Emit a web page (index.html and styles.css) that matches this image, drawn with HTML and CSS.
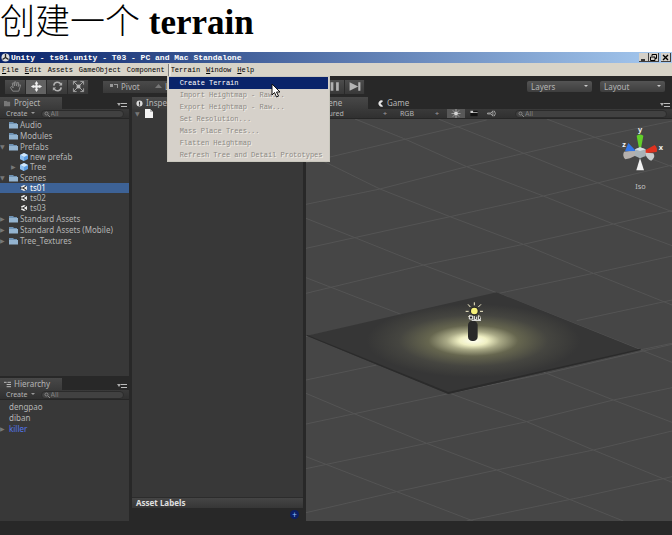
FILE: index.html
```
<!DOCTYPE html>
<html lang="zh-CN">
<head>
  <meta charset="UTF-8">
  <meta name="viewport" content="width=device-width, initial-scale=1.0">
  <title>创建一个 terrain</title>
  <link rel="stylesheet" href="styles.css">
</head>
<body>
  <h1 class="heading">创建一个 <b>terrain</b></h1>

  <div class="app">
    <div class="titlebar">
      <svg class="logo" viewBox="0 0 9 9"><circle cx="4.500" cy="4.500" r="4" fill="#ddd"/><path d="M4.500 4.500V1M4.500 4.500L1.500 6.500M4.500 4.500L7.500 6.500" stroke="#222" stroke-width="1.300"/></svg>
      <span class="caption">Unity - ts01.unity - T03 - PC and Mac Standalone</span>
      <div class="window-btns">
        <button aria-label="Minimize"><svg viewBox="0 0 9 9"><path d="M2 7H6" stroke="#000" stroke-width="1.500"/></svg></button>
        <button aria-label="Restore"><svg viewBox="0 0 9 9"><path d="M3 3V1.500H7.500V5.500H6M1.500 4H6V7.500H1.500Z" fill="none" stroke="#000"/></svg></button>
        <button class="close" aria-label="Close"><svg viewBox="0 0 9 9"><path d="M2 2L7 7M7 2L2 7" stroke="#000" stroke-width="1.400"/></svg></button>
      </div>
    </div>

    <nav class="menubar">
      <button><u>F</u>ile</button>
      <button><u>E</u>dit</button>
      <button>Assets</button>
      <button>GameObject</button>
      <button>Component</button>
      <div class="menu-open">
        <button class="open">Terrain</button>
        <div class="dropdown">
          <button class="active">Create Terrain</button>
          <button disabled>Import Heightmap - Raw...</button>
          <button disabled>Export Heightmap - Raw...</button>
          <button disabled>Set Resolution...</button>
          <button disabled>Mass Place Trees...</button>
          <button disabled>Flatten Heightmap</button>
          <button disabled>Refresh Tree and Detail Prototypes</button>
          <svg class="cursor" viewBox="0 0 10 15"><path d="M1 1V12L3.500 9.500L5.500 14L7.500 13L5.500 9H9Z" fill="#fff" stroke="#111"/></svg>
        </div>
      </div>
      <button><u>W</u>indow</button>
      <button><u>H</u>elp</button>
    </nav>

    <div class="toolbar">
      <div class="tools">
        <button aria-label="Hand"><svg viewBox="0 0 14 14"><path d="M4 12L1.500 8L3 7L4.500 8.500L3.500 3.500L5 3L6 6.500V2L7.500 2L8 6.500L9 2.500L10.500 3L10 7L11.500 5L12.500 5.500L10.500 12Z" fill="none" stroke="#8b8b8b"/></svg></button>
        <button class="on" aria-label="Move"><svg viewBox="0 0 14 14"><path d="M7 1L9 4H8V6H10V5L13 7L10 9V8H8V10H9L7 13L5 10H6V8H4V9L1 7L4 5V6H6V4H5Z" fill="#eee"/></svg></button>
        <button aria-label="Rotate"><svg viewBox="0 0 14 14"><path d="M3 6A4 4 0 0 1 10.500 4.500M11 8A4 4 0 0 1 3.500 9.500" fill="none" stroke="#b0b0b0" stroke-width="1.700"/><path d="M8.500 6H12V2.500ZM5.500 8H2V11.500Z" fill="#b0b0b0"/></svg></button>
        <button aria-label="Scale"><svg viewBox="0 0 14 14"><path d="M2 2L12 12M12 2L2 12M1.500 5V1.500H5M9 1.500H12.500V5M12.500 9V12.500H9M5 12.500H1.500V9" fill="none" stroke="#aaa"/><path d="M5 5H9V9H5Z" fill="#bbb"/></svg></button>
      </div>
      <div class="handles">
        <button><svg viewBox="0 0 9 7"><path d="M0 1H3V4H0ZM4 1H8V5H7V2H4Z" fill="#999"/></svg>Pivot</button>
        <button><svg viewBox="0 0 9 7"><path d="M1 5L4.500 1L8 5Z" fill="#777"/></svg>Local</button>
      </div>
      <div class="play">
        <button aria-label="Play"><svg viewBox="0 0 14 12"><path d="M3 2L11 6L3 10Z" fill="#aaa"/></svg></button>
        <button aria-label="Pause"><svg viewBox="0 0 14 12"><path d="M3 2H5.500V10H3ZM8 2H10.500V10H8Z" fill="#b0b0b0"/></svg></button>
        <button aria-label="Step"><svg viewBox="0 0 14 12"><path d="M2 2L10 6V2H12V10H10V6L2 10Z" fill="#b5b5b5"/></svg></button>
      </div>
      <label class="drop"><select aria-label="Layers"><option>Layers</option></select></label>
      <label class="drop"><select aria-label="Layout"><option>Layout</option></select></label>
    </div>

    <main class="workspace">
      <div class="side">
        <section class="panel">
          <div class="tabs">
            <button class="tab"><svg viewBox="0 0 8 8"><path d="M0 1H3L4 2H7V7H0Z" fill="#777"/></svg>Project</button>
            <button class="options" aria-label="Panel options"><svg viewBox="0 0 10 5"><path d="M0 1H4L2 4Z" fill="#aaa"/><path d="M4 1.500H10M4 4.500H10" stroke="#bbb"/></svg></button>
          </div>
          <div class="panel-bar">
            <button class="create">Create</button>
            <input class="search" type="search" placeholder="All" aria-label="Search project">
          </div>
          <ul class="tree">
            <li><i></i><svg class="folder"><use href="#folder"/></svg>Audio</li>
            <li><i></i><svg class="folder"><use href="#folder"/></svg>Modules</li>
            <li><i class="down"></i><svg class="folder"><use href="#folder"/></svg>Prefabs</li>
            <li class="child"><i></i><svg class="item"><use href="#cube"/></svg>new prefab</li>
            <li class="child"><i class="right"></i><svg class="item"><use href="#cube"/></svg>Tree</li>
            <li><i class="down"></i><svg class="folder"><use href="#folder"/></svg>Scenes</li>
            <li class="child selected"><i></i><svg class="item"><use href="#scene"/></svg>ts01</li>
            <li class="child"><i></i><svg class="item"><use href="#scene"/></svg>ts02</li>
            <li class="child"><i></i><svg class="item"><use href="#scene"/></svg>ts03</li>
            <li><i class="right"></i><svg class="folder"><use href="#folder"/></svg>Standard Assets</li>
            <li><i class="right"></i><svg class="folder"><use href="#folder"/></svg>Standard Assets (Mobile)</li>
            <li><i class="right"></i><svg class="folder"><use href="#folder"/></svg>Tree_Textures</li>
          </ul>
        </section>

        <section class="panel">
          <div class="tabs">
            <button class="tab"><svg viewBox="0 0 8 8"><path d="M0 1.500H3M3 4H8M3 6.500H8M4 1.500H8" stroke="#ccc"/></svg>Hierarchy</button>
            <button class="options" aria-label="Panel options"><svg viewBox="0 0 10 5"><path d="M0 1H4L2 4Z" fill="#aaa"/><path d="M4 1.500H10M4 4.500H10" stroke="#bbb"/></svg></button>
          </div>
          <div class="panel-bar">
            <button class="create">Create</button>
            <input class="search" type="search" placeholder="All" aria-label="Search hierarchy">
          </div>
          <ul class="tree objects">
            <li><i></i>dengpao</li>
            <li><i></i>diban</li>
            <li class="prefab"><i class="right"></i>killer</li>
          </ul>
        </section>
      </div>

      <section class="panel inspector">
        <div class="tabs">
          <button class="tab"><svg viewBox="0 0 8 8"><circle cx="4" cy="4" r="3.500" fill="#ddd"/><path d="M4 2V5M4 5.500V6.500" stroke="#333" stroke-width="1.300"/></svg>Inspector</button>
        </div>
        <div class="asset">
          <i class="down"></i>
          <svg viewBox="0 0 8 9"><path d="M0 0H5L8 3V9H0Z" fill="#f4f4f4"/><path d="M5 0V3H8" fill="#bbb"/></svg>
        </div>
        <div class="labels">Asset Labels</div>
        <div class="labels-foot"><button class="add" aria-label="Add label">+</button></div>
      </section>

      <section class="panel scene">
        <div class="tabs">
          <button class="tab"><svg viewBox="0 0 8 8"><path d="M1 1V7M4 1V7M1 4H7" stroke="#aaa"/></svg>Scene</button>
          <button class="tab off"><svg viewBox="0 0 8 8"><path d="M7 1A3.500 3.500 0 1 0 7 7L4 4Z" fill="#e4e4e4"/></svg>Game</button>
          <button class="options" aria-label="Panel options"><svg viewBox="0 0 10 5"><path d="M0 1H4L2 4Z" fill="#aaa"/><path d="M4 1.500H10M4 4.500H10" stroke="#bbb"/></svg></button>
        </div>
        <div class="panel-bar view-bar">
          <select class="shading" aria-label="Draw mode"><option>Textured</option></select>
          <span class="updown">÷</span>
          <select class="channel" aria-label="Render mode"><option>RGB</option></select>
          <span class="updown">÷</span>
          <button class="toggle on" aria-label="Lighting"><svg viewBox="0 0 12 10"><circle cx="6" cy="5" r="2" fill="#eee"/><path d="M6 0V10M1 5H11M2.500 1.500L9.500 8.500M9.500 1.500L2.500 8.500" stroke="#ccc" stroke-width=".7"/></svg></button>
          <button class="toggle" aria-label="Overlays"><svg viewBox="0 0 12 10"><path d="M2 2H10V8H2Z" fill="#111"/><path d="M2 2H5V3.500H10V4.500H2Z" fill="#ccc"/></svg></button>
          <button class="toggle" aria-label="Audio"><svg viewBox="0 0 12 10"><path d="M1 4.500H5L7 2V8L5 5.500H1ZM8.500 2Q11 5 8.500 8" fill="none" stroke="#aaa"/></svg></button>
          <input class="search" type="search" placeholder="All" aria-label="Search scene">
        </div>
        <svg class="viewport" viewBox="18 27 1098 1206" preserveAspectRatio="xMidYMid slice">
          <defs>
            <radialGradient id="glow" gradientUnits="userSpaceOnUse" cx="0" cy="0" r="1" gradientTransform="translate(520 692) scale(320 110)">
              <stop offset="0" stop-color="#fffff0"/>
              <stop offset=".13" stop-color="#f0f0c4"/>
              <stop offset=".25" stop-color="#a9a986"/>
              <stop offset=".42" stop-color="#66664f"/>
              <stop offset=".7" stop-color="#454540"/>
              <stop offset="1" stop-color="#363636"/>
            </radialGradient>
          </defs>
          <!-- ground grid -->
          <g class="grid">
            <path d="M18 158L200 115L560 30M18 283L240 237L500 170L800 100L1116 33M18 415L450 320L730 258L1116 165M18 550L370 465L670 403L940 342L1116 302M18 680L620 545L880 490L1116 438M830 632L1116 570M18 810L230 765M980 728L1116 700M18 942L450 850L740 790L1116 703M18 1076L380 1000L680 935L940 870L1116 833M18 1208L290 1145L590 1080L880 1020L1116 963M500 1233L850 1160L1116 1100"/>
            <path d="M165 27L310 85L500 170L730 258L940 342L1116 407M18 128L240 237L450 320L670 403L880 490L1116 585M18 325L170 385L370 465L590 548L1116 757M18 503L290 608L740 790L940 870L1116 937M450 850L680 935L880 1020L1116 1117M18 850L160 910L380 1000L590 1080L970 1233M18 1040L290 1145L520 1233M415 27L560 85L820 190L1116 305M740 27L1116 170"/>
          </g>
          <path d="M20 677L590 547L1022 720L445 852Z" fill="url(#glow)"/>
          <path d="M445 852L1022 720V716L445 846L20 674V677Z" fill="#2b2b2b"/>
          <rect x="504" y="632" width="29" height="61" rx="13" fill="#292929"/>
          <!-- light icon -->
          <circle cx="523" cy="603" r="13" fill="#222"/>
          <circle cx="523" cy="603" r="10" fill="#f5f07a"/>
          <path d="M523 586V577M535 591L543 583M540 604H549M535 615L541 621M511 615L505 621M506 604H497M511 591L504 583" stroke="#f4eecb" stroke-width="3"/>
          <path d="M508 618H518V627H508ZM523 618V629H529V620M535 618V629H541V622M515 631H543" fill="#222" stroke="#f3f3f3" stroke-width="3"/>
          <!-- axis gizmo -->
          <path d="M1010 120L972 125Q966 138 976 148L990 145L1012 134Z" fill="#b5b0ad"/>
          <path d="M1008 123L985 99L975 124Z" fill="#3276e8"/>
          <path d="M1017 115L1010 77Q1020 70 1030 77L1023 115Z" fill="#62cf29"/>
          <path d="M1030 124L1064 105Q1074 114 1070 126L1036 130Z" fill="#df321f"/>
          <path d="M1034 128L1060 130Q1068 142 1054 152Q1042 150 1034 128Z" fill="#c9cdce"/>
          <path d="M1005 118L1020 112L1037 118V138L1020 145L1005 138Z" fill="#a9b2b7"/>
          <path d="M1005 118L1020 112L1037 118L1020 123Z" fill="#d5dee2"/>
          <path d="M1020 144L1009 181H1032Z" fill="#f1f1f1"/>
          <g class="axis">
            <text x="1014" y="65">y</text>
            <text x="1076" y="119">x</text>
            <text x="967" y="112">z</text>
          </g>
          <text class="iso" x="1006" y="237">Iso</text>
        </svg>
      </section>
    </main>
    <footer class="status"></footer>
  </div>

  <svg class="sprites" aria-hidden="true">
    <symbol id="folder" viewBox="0 0 9 8"><path d="M0 1H4L5 2H8V7H0Z" fill="#6f92b3"/><path d="M0 3H9V7.500H0Z" fill="#94b4d0"/></symbol>
    <symbol id="cube" viewBox="0 0 8 8"><path d="M4 0L8 2V6L4 8L0 6V2Z" fill="#5c9ee4"/><path d="M4 0L8 2L4 4L0 2Z" fill="#d2e8fb"/><path d="M0 2L4 4V8L0 6Z" fill="#8fc0f0"/></symbol>
    <symbol id="scene" viewBox="0 0 8 8"><path d="M4 1L7 2.500V5.500L4 7L1 5.500V2.500Z" fill="#ececec"/><path d="M3 4L6 2M3 4L6 6M3 4H0" stroke="#222" stroke-width="1"/></symbol>
  </svg>
</body>
</html>
```
FILE: styles.css
```
* {
  margin: 0;
  padding: 0;
  box-sizing: border-box;
}

body {
  min-height: 100vh;
  display: flex;
  flex-direction: column;
  background-color: #fff;
  font-family: "Noto Sans", sans-serif;
  font-size: 8px;
  line-height: 10px;
  color: #b4b4b4;
}

button, select, input {
  font: inherit;
  color: inherit;
  background: none;
  border: none;
  outline: none;
  appearance: none;
}

svg {
  display: block;
  flex: none;
}

.sprites {
  position: absolute;
  width: 0;
  height: 0;
}

.heading {
  height: 52px;
  font-family: "Liberation Serif", "Noto Sans CJK SC", serif;
  font-size: 35px;
  font-weight: 300;
  line-height: 46px;
  color: #000;
}

.heading b {
  font-weight: 700;
}

.app {
  flex: 1;
  display: flex;
  flex-direction: column;
  background-color: #282828;
}

/* window frame */
.titlebar {
  height: 11px;
  display: flex;
  align-items: center;
  gap: 1px;
  padding: 0 1px;
  background: linear-gradient(to right, #0a246a, #a6caf0);
  font-family: "Liberation Mono", monospace;
  font-size: 8px;
  font-weight: bold;
  color: #fff;
}

.logo {
  width: 9px;
  height: 9px;
}

.caption {
  flex: 1;
}

.window-btns {
  display: flex;
}

.window-btns button {
  width: 10px;
  height: 9px;
  background-color: #d4d0c8;
  border-right: 1px solid #404040;
  border-bottom: 1px solid #404040;
}

.window-btns .close {
  margin-left: 2px;
}

.menubar {
  height: 13px;
  display: flex;
  align-items: center;
  gap: 6px;
  padding: 0 2px;
  background-color: #d8d4c8;
  font-family: "Liberation Mono", monospace;
  font-size: 7px;
  line-height: 12px;
  color: #000;
}

.menu-open {
  position: relative;
}

.open {
  box-shadow: -2px 0 0 #e8e6de, -3px 0 0 #808080;
}

.dropdown {
  position: absolute;
  top: 13px;
  left: -3px;
  z-index: 2;
  width: 161px;
  display: flex;
  flex-direction: column;
  padding: 0 1px;
  background-color: #d6d1ca;
  box-shadow: 0 0 0 1px #c9c7bd;
}

.dropdown button {
  height: 12px;
  padding-left: 11px;
  text-align: left;
  white-space: nowrap;
}

.dropdown button:disabled {
  color: #8c8984;
  text-shadow: 1px 1px 0 #f2efe9;
}

.dropdown .active {
  background-color: #0a246a;
  color: #fff;
}

.cursor {
  position: absolute;
  top: 6px;
  left: 103px;
  width: 10px;
  height: 15px;
}

/* main toolbar */
.toolbar {
  height: 21px;
  display: flex;
  align-items: center;
  gap: 8px;
  padding: 0 7px 0 5px;
}

.tools, .play, .handles {
  display: flex;
}

.tools button, .play button {
  height: 14px;
  display: flex;
  align-items: center;
  justify-content: center;
  background: linear-gradient(#4c4c4c, #383838);
  border-right: 1px solid #2a2a2a;
}

.tools button {
  width: 21px;
}

.tools .on {
  background: #626262;
}

.tools svg {
  width: 13px;
  height: 13px;
}

.handles {
  margin-left: 6px;
}

.handles button {
  width: 44px;
  height: 12px;
  display: flex;
  align-items: center;
  gap: 2px;
  padding-left: 7px;
  background: linear-gradient(#4a4a4a, #393939);
}

.handles svg {
  width: 9px;
  height: 7px;
}

.play {
  flex: 1;
  margin-left: 106px;
}

.play button {
  width: 20px;
}

.play svg {
  width: 16px;
  height: 13px;
}

.drop {
  position: relative;
}

.drop select {
  width: 65px;
  height: 11px;
  display: block;
  padding: 0 4px;
  background: linear-gradient(#545454, #3e3e3e);
  border-radius: 2px;
}

.drop::after {
  content: "";
  position: absolute;
  top: 4px;
  right: 4px;
  border: 2px solid transparent;
  border-top-color: #ccc;
}

/* docked panels */
.workspace {
  flex: 1;
  display: grid;
  grid-template-columns: 129fr 171fr 366fr;
  gap: 3px;
}

.side {
  display: grid;
  grid-template-rows: 279fr 143fr;
  gap: 2px;
}

.panel {
  min-width: 0;
  display: flex;
  flex-direction: column;
  background-color: #383838;
}

.tabs {
  height: 12px;
  display: flex;
  align-items: stretch;
  background-color: #282828;
}

.tab {
  min-width: 62px;
  display: flex;
  align-items: center;
  gap: 3px;
  padding: 0 4px;
  background: linear-gradient(#484848, #3a3a3a);
}

.tab.off {
  padding-left: 9px;
  background: none;
}

.tab svg {
  width: 7px;
  height: 7px;
}

.options {
  align-self: flex-end;
  margin: 0 2px 2px auto;
}

.options svg {
  width: 10px;
  height: 5px;
}

.panel-bar {
  height: 10px;
  display: flex;
  align-items: center;
  padding: 0 5px 0 6px;
  background: linear-gradient(#3a3a3a, #303030);
  border-bottom: 1px solid #262626;
  font-size: 7px;
  line-height: 9px;
}

.create {
  display: flex;
  align-items: center;
  gap: 3px;
}

.create::after {
  content: "";
  margin-top: 1px;
  border: 2px solid transparent;
  border-top-color: #999;
}

.search {
  flex: 1;
  min-width: 0;
  height: 8px;
  margin-left: 6px;
  padding: 0 9px;
  background: #414141 url("data:image/svg+xml,%3Csvg xmlns='http://www.w3.org/2000/svg' width='6' height='6'%3E%3Ccircle cx='2.5' cy='2.5' r='1.5' fill='none' stroke='%23888'/%3E%3Cpath d='M4 4L6 6' stroke='%23888'/%3E%3C/svg%3E") no-repeat 2px center;
  border: 1px solid #2b2b2b;
  border-radius: 4px;
}

.search::placeholder {
  color: #808080;
}

.tree {
  list-style: none;
}

.tree li {
  height: 11px;
  display: flex;
  align-items: center;
  gap: 2px;
  white-space: nowrap;
}

.tree .child {
  height: 10px;
  padding-left: 11px;
}

.tree .selected {
  background-color: #3d6296;
  color: #fff;
}

.tree i, .asset i {
  width: 7px;
  flex: none;
}

.tree i::before, .asset i::before {
  display: block;
  font-family: "DejaVu Sans", sans-serif;
  font-style: normal;
  font-size: 6px;
  color: #777;
}

i.right::before {
  content: "▶";
}

i.down::before {
  content: "▼";
}

.folder {
  width: 9px;
  height: 8px;
}

.item {
  width: 8px;
  height: 8px;
}

.objects {
  padding-top: 1px;
}

.objects .prefab {
  color: #5577ee;
}

/* inspector */
.asset {
  flex: 1;
  display: flex;
  align-items: flex-start;
  gap: 3px;
  padding: 0 3px;
}

.asset svg {
  width: 8px;
  height: 9px;
}

.labels {
  height: 11px;
  padding-left: 4px;
  background: linear-gradient(#454545, #363636);
  border-top: 1px solid #2c2c2c;
  font-weight: bold;
  color: #e0e0e0;
}

.labels-foot {
  height: 13px;
  display: flex;
  justify-content: flex-end;
  align-items: center;
  padding-right: 4px;
  background-color: #282828;
}

.add {
  width: 9px;
  height: 9px;
  background-color: #0c1f66;
  border-radius: 50%;
  line-height: 9px;
  color: #9cc4ff;
}

/* scene view */
.shading {
  width: 71px;
  padding-left: 3px;
}

.channel {
  width: 35px;
  margin-left: 11px;
}

.updown {
  width: 6px;
}

.toggle {
  width: 18px;
  height: 9px;
  display: flex;
  align-items: center;
  justify-content: center;
}

.view-bar .updown + .toggle {
  margin-left: 6px;
}

.toggle.on {
  background-color: #585858;
}

.toggle svg {
  width: 12px;
  height: 9px;
}

.view-bar .search {
  margin-left: 14px;
}

.viewport {
  flex: 1 1 0;
  width: 100%;
  min-height: 0;
  background-color: #464646;
}

.grid {
  fill: none;
  stroke: #545454;
  stroke-width: 3;
}

.axis {
  font-size: 22px;
  font-weight: bold;
  fill: #f0f0f0;
}

.iso {
  font-size: 22px;
  fill: #c4c4c4;
}

.status {
  height: 14px;
  background-color: #282828;
}
```
